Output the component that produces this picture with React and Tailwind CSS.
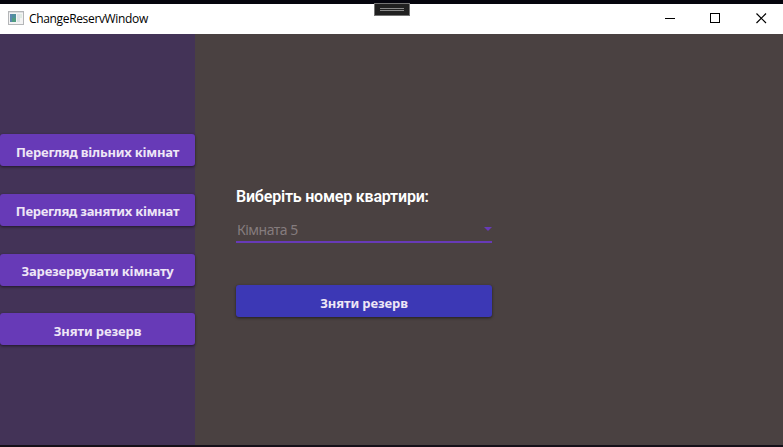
import React from "react";

const navItems = [
  { label: "Перегляд вільних кімнат", gap: "mt-[100px] pt-1 tracking-[-0.21px]" },
  { label: "Перегляд занятих кімнат", gap: "mt-7 pt-[2px] tracking-[-0.26px]" },
  { label: "Зарезервувати кімнату", gap: "mt-7 pt-[2px] tracking-[-0.19px]" },
  { label: "Зняти резерв", gap: "mt-[27px] pt-1 tracking-[-0.1px]" },
];

function RaisedButton({ className, children }) {
  return (
    <button
      className={`flex h-8 shrink-0 items-center justify-center whitespace-nowrap rounded-[3px] font-['Noto_Sans','Open_Sans',sans-serif] text-[13px] leading-4 font-bold text-[#eee6f6] shadow-[0_1px_3px_rgba(0,0,0,0.55)] ${className}`}
    >
      {children}
    </button>
  );
}

function AppIcon() {
  return (
    <svg width="16" height="14" viewBox="0 0 16 14" shapeRendering="crispEdges">
      <rect x="0.5" y="0.5" width="15" height="13" fill="#f4f4f4" stroke="#b4b6b8" />
      <rect x="1" y="1" width="14" height="1" fill="#dcdee0" />
      <rect x="2" y="3" width="6" height="8" fill="#4f8f9c" />
      <rect x="2" y="3" width="2" height="8" fill="#5b86ae" />
      <rect x="4" y="7" width="4" height="4" fill="#4f9c80" />
      <rect x="9" y="3" width="3" height="8" fill="#dde3e6" />
      <rect x="12" y="3" width="2" height="4" fill="#e0ebe4" />
    </svg>
  );
}

export default function App() {
  return (
    <div className="relative flex h-[447px] w-[783px] flex-col overflow-hidden bg-[#4a4141]">
      <div className="h-1 shrink-0 bg-[#04040d]" />
      <header className="flex h-[30px] shrink-0 items-center bg-white pl-2">
        <div className="-mt-0.5">
          <AppIcon />
        </div>
        <span className="ml-[5px] font-['Open_Sans','Noto_Sans',sans-serif] text-[12px] leading-4 tracking-[-0.34px] text-black">
          ChangeReservWindow
        </span>
        <svg className="ml-auto mr-[13px]" width="106" height="12" viewBox="0 0 106 12" fill="none" stroke="#000">
          <path d="M1 5.5h10" />
          <rect x="46.5" y="0.5" width="9" height="9" />
          <path d="M92.500 0.5l9.500 9.500M102 0.5L92.500 10" strokeWidth="1.200" />
        </svg>
      </header>
      <div className="flex min-h-0 flex-1">
        <nav className="flex w-[195px] shrink-0 flex-col bg-[#433357]">
          {navItems.map((item) => (
            <RaisedButton key={item.label} className={`w-full bg-[#673ab7] ${item.gap}`}>
              {item.label}
            </RaisedButton>
          ))}
        </nav>
        <main className="flex flex-1 flex-col pl-[41px] pt-[153px]">
          <h1 className="h-5 whitespace-nowrap font-[Roboto,sans-serif] text-[16px] leading-5 font-semibold tracking-[-0.2px] text-white">
            Виберіть номер квартири:
          </h1>
          <div className="mt-3 flex h-6 w-64 items-center justify-between border-b-2 border-[#673ab7] pl-px">
            <span className="font-['Noto_Sans','Open_Sans',sans-serif] text-[14px] leading-4 tracking-[-0.5px] text-[#857c7e]">
              Кімната 5
            </span>
            <svg className="-mt-0.5" width="8" height="4" viewBox="0 0 8 4">
              <path d="M0 0h8L4 4z" fill="#673ab7" />
            </svg>
          </div>
          <RaisedButton className="mt-[42px] w-64 bg-[#3c38b5] pt-1 tracking-[-0.1px]">Зняти резерв</RaisedButton>
        </main>
      </div>
      <div className="h-[2px] shrink-0 bg-[#151019]" />
      <div className="absolute left-[374px] top-[3px] flex h-[13px] w-9 flex-col items-center justify-center gap-px border border-[#747474] bg-[#202020]">
        <div className="h-px w-6 bg-[#8a8a8a]" />
        <div className="h-px w-6 bg-[#8a8a8a]" />
      </div>
    </div>
  );
}
